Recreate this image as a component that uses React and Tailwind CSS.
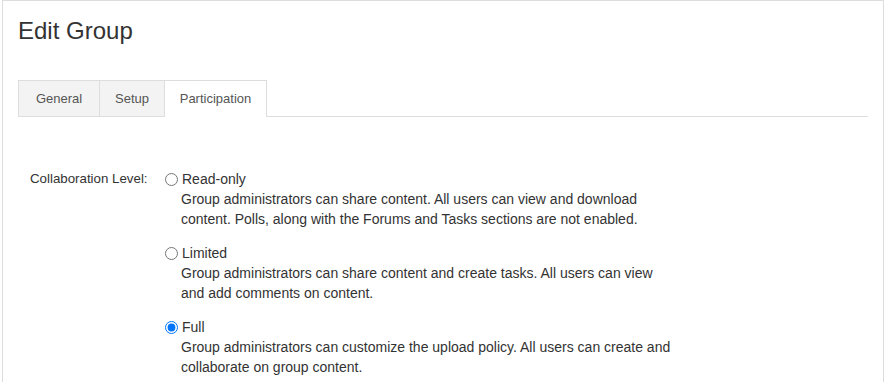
import React, { useState } from "react";

const levels = [
  {
    id: "readonly",
    label: "Read-only",
    text: "Group administrators can share content. All users can view and download content. Polls, along with the Forums and Tasks sections are not enabled.",
  },
  {
    id: "limited",
    label: "Limited",
    text: "Group administrators can share content and create tasks. All users can view and add comments on content.",
  },
  {
    id: "full",
    label: "Full",
    text: "Group administrators can customize the upload policy. All users can create and collaborate on group content.",
  },
];

function App() {
  const [level, setLevel] = useState("full");

  return (
    <div className="bg-white h-screen overflow-hidden font-['Liberation_Sans',Arial,sans-serif] text-[#333]">
      <div className="ml-[2px] mr-[1px] border border-[#ddd] border-b-0 px-[15px] pt-[16px] h-[420px]">
        <h1 className="text-[24px] leading-[28px] font-normal text-[#333]">Edit Group</h1>

        {/* Tabs */}
        <div className="mt-[35px] flex items-end border-b border-[#ddd] h-[37px] text-[13px] text-[#555]">
          <div className="-mb-px h-[37px] w-[81px] flex items-center justify-center border-l border-t border-b border-[#ddd] bg-[#f3f3f3]">
            General
          </div>
          <div className="-mb-px h-[37px] w-[65px] flex items-center justify-center border-l border-t border-b border-[#ddd] bg-[#f3f3f3]">
            Setup
          </div>
          <div className="-mb-px h-[37px] w-[103px] flex items-center justify-center border-l border-r border-t border-[#ddd] bg-white">
            Participation
          </div>
        </div>

        {/* Form */}
        <div className="mt-[52px] flex leading-[20px]">
          <div className="w-[147px] pl-[12px] text-[13.3px]">Collaboration Level:</div>
          <div className="flex flex-col gap-[14px] text-[14px]">
            {levels.map((l) => (
              <label key={l.id} className="flex items-start cursor-pointer">
                <input
                  type="radio"
                  name="level"
                  checked={level === l.id}
                  onChange={() => setLevel(l.id)}
                  className="mt-[4px] ml-0 mr-[4px] w-[13px] h-[13px]"
                />
                <div className="w-[494px]">
                  <div>{l.label}</div>
                  <div className="-ml-px">{l.text}</div>
                </div>
              </label>
            ))}
          </div>
        </div>
      </div>
    </div>
  );
}

export default App;
